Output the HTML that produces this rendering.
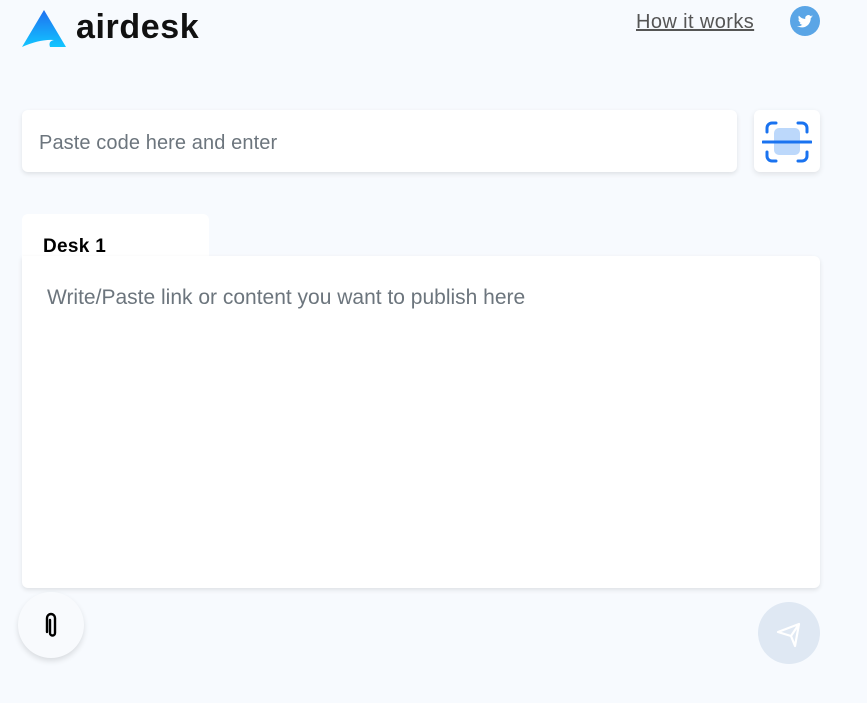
<!DOCTYPE html>
<html><head><style>
body{margin:0;width:867px;height:703px;background:#f7fafe;font-family:"Liberation Sans",sans-serif;position:relative;overflow:hidden}
.abs{position:absolute}
</style></head><body>
<svg class="abs" style="left:22px;top:10px" width="44" height="38" viewBox="0 0 44 38">
<defs><linearGradient id="g" x1="0" y1="0" x2="0" y2="1"><stop offset="0" stop-color="#1f6ff0"/><stop offset="1" stop-color="#12c6ff"/></linearGradient></defs>
<path d="M22 0 L44 37 L28 37 Q26 31 32 30 Q18 29 0 37 Z" fill="url(#g)"/>
</svg>
<div class="abs" style="left:76px;top:8px;font-size:34px;font-weight:bold;color:#111;letter-spacing:0.6px">airdesk</div>
<div class="abs" style="left:636px;top:11px;font-size:20px;color:#555;text-decoration:underline;letter-spacing:0.4px">How it works</div>
<svg class="abs" style="left:790px;top:6px" width="30" height="30" viewBox="0 0 30 30"><circle cx="15" cy="15" r="15" fill="#5aa5e6"/><path d="M23 10.5c-.6.3-1.2.4-1.8.5.7-.4 1.1-1 1.4-1.7-.6.4-1.3.6-2 .8a3.1 3.1 0 0 0-5.3 2.8c-2.6-.1-4.9-1.4-6.4-3.3-.9 1.5-.4 3.3.9 4.2-.5 0-1-.2-1.4-.4 0 1.5 1.1 2.8 2.5 3.1-.5.1-.9.2-1.4.1.4 1.3 1.6 2.1 2.9 2.2A6.3 6.3 0 0 1 7 20c1.4.9 3 1.4 4.8 1.4 5.8 0 9-4.9 8.9-9.2.6-.5 1.2-1 1.6-1.7z" fill="#fff"/></svg>
<div class="abs" style="left:22px;top:110px;width:715px;height:62px;background:#fff;border-radius:6px;box-shadow:0 2px 5px rgba(0,0,0,.1)"></div>
<div class="abs" style="left:39px;top:132px;font-size:20px;color:#6c757d;letter-spacing:0.1px">Paste code here and enter</div>
<div class="abs" style="left:754px;top:110px;width:66px;height:62px;background:#fff;border-radius:6px;box-shadow:0 2px 6px rgba(0,0,0,.1)"></div>
<svg class="abs" style="left:762px;top:120px" width="50" height="44" viewBox="0 0 50 44">
<rect x="12" y="8" width="26" height="27" rx="5" fill="#bcd8fb"/>
<g fill="none" stroke="#1a73f0" stroke-width="3" stroke-linecap="round">
<path d="M5 12 V8 a5 5 0 0 1 5-5 H14"/><path d="M36 3 H40 a5 5 0 0 1 5 5 V12"/>
<path d="M5 32 V36 a5 5 0 0 0 5 5 H14"/><path d="M36 41 H40 a5 5 0 0 0 5-5 V32"/>
<path d="M1 22 H49"/></g></svg>
<div class="abs" style="left:22px;top:214px;width:187px;height:50px;background:#fff;border-radius:6px 6px 0 0"></div>
<div class="abs" style="left:43px;top:236px;font-size:19px;font-weight:bold;color:#000;letter-spacing:0.3px">Desk 1</div>
<div class="abs" style="left:22px;top:256px;width:798px;height:332px;background:#fff;border-radius:0 6px 6px 6px;box-shadow:0 2px 5px rgba(0,0,0,.1)"></div>
<div class="abs" style="left:47px;top:286px;font-size:21px;color:#6c757d">Write/Paste link or content you want to publish here</div>
<div class="abs" style="left:18px;top:592px;width:66px;height:66px;border-radius:50%;background:#f8fafd;box-shadow:0 3px 6px rgba(0,0,0,.12)"></div>
<svg class="abs" style="left:40px;top:611px" width="22" height="28" viewBox="0 0 22 28"><path d="M7 21 V7 a4 4 0 0 1 8 0 V22 a2.5 2.5 0 0 1-5 0 V9" fill="none" stroke="#000" stroke-width="2.4" stroke-linecap="round"/></svg>
<div class="abs" style="left:758px;top:602px;width:62px;height:62px;border-radius:50%;background:#dfe8f3"></div>
<svg class="abs" style="left:775px;top:620px" width="28" height="28" viewBox="0 0 28 28"><path d="M3 12 L24 4 L20 26 L16 16 Z M16 16 L24 4" fill="none" stroke="#fff" stroke-width="2.2" stroke-linejoin="round"/></svg>
</body></html>
